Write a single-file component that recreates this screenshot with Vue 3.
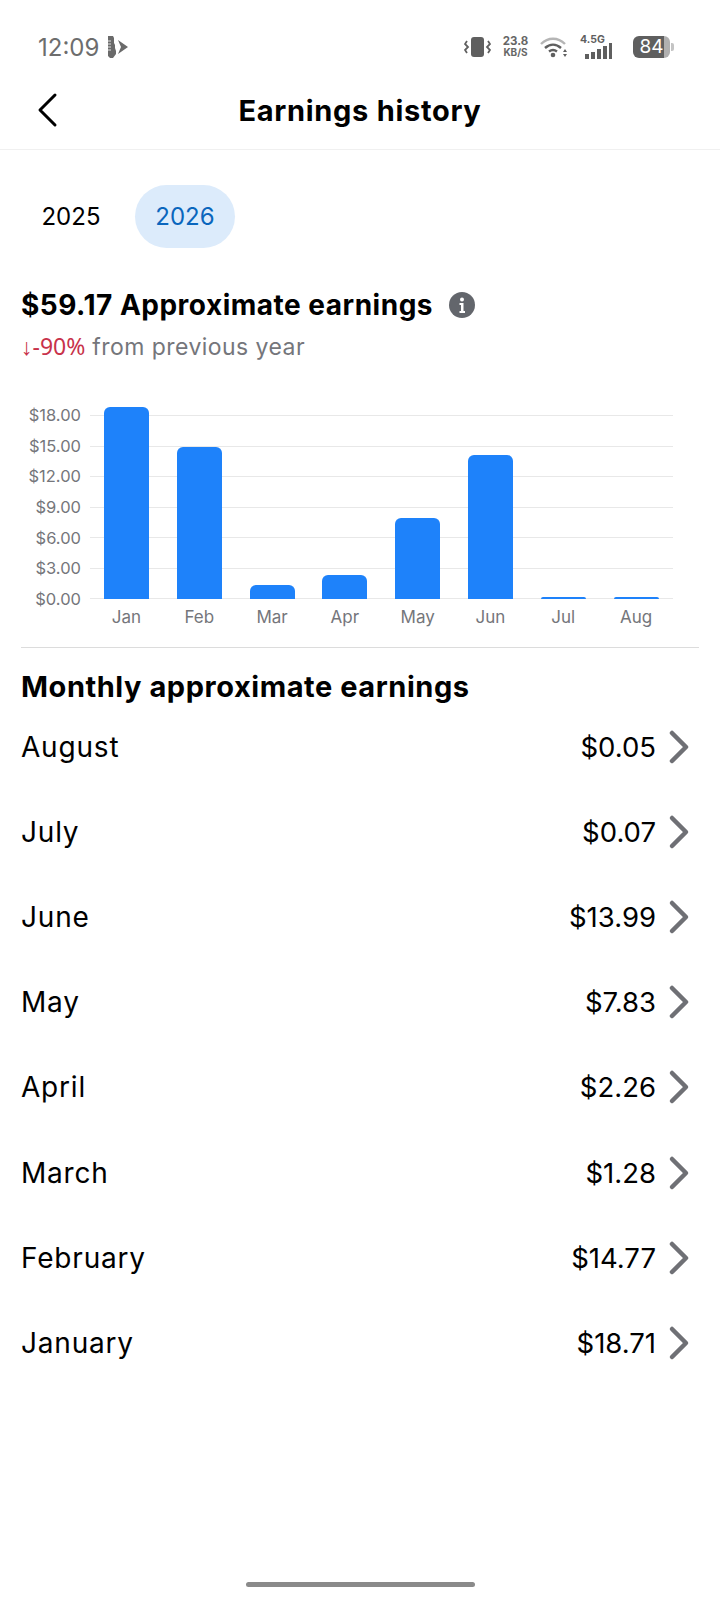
<template>
  <div class="page">
    <div class="status-bar">
      <div class="status-left">
        <span class="clock">12:09</span>
        <svg class="status-glyph" width="22" height="24" viewBox="0 0 22 24">
          <path d="M1 1h5l1 2v5l1 2v3l1 3v3l-3 4-3 0-2-2z" fill="#6a6a6a" />
          <path d="M1 6h3M1 9h3M1 12h3M1 15h3" stroke="#fff" stroke-width="0.800" />
          <path d="M11 5l10 7-10 7 3-7z" fill="#6a6a6a" />
        </svg>
      </div>
      <div class="status-right">
        <svg width="27" height="22" viewBox="0 0 27 22">
          <rect x="7" y="1" width="13" height="20" rx="3" fill="#5f5f5f" />
          <path d="M3 5l-2 3 3 3-3 3 2 3M24 5l2 3-3 3 3 3-2 3" fill="none" stroke="#5f5f5f" stroke-width="1.800" />
        </svg>
        <div class="net-speed"><span>23.8</span><span class="net-unit">KB/S</span></div>
        <svg width="28" height="22" viewBox="0 0 28 22">
          <path d="M1 8c7-7 17-7 24 0" fill="none" stroke="#b5b5b5" stroke-width="2.400" />
          <path d="M5 12c5-4.500 11-4.500 16 0M9 15.500c3-2.300 5-2.300 8 0" fill="none" stroke="#5f5f5f" stroke-width="2.400" />
          <circle cx="13" cy="19" r="2.300" fill="#5f5f5f" />
          <path d="M25 13l2 3h-4zM25 21l2-3h-4z" fill="#5f5f5f" />
        </svg>
        <div class="signal">
          <span class="signal-label">4.5G</span>
          <svg width="28" height="16" viewBox="0 0 28 16">
            <path d="M1 11h4v5h-4zM7 9h4v7h-4zM13 6h4v10h-4zM19 3h4v13h-4zM25 0h3v16h-3z" fill="#5f5f5f" />
          </svg>
        </div>
        <div class="battery">
          <div class="battery-body">84</div>
          <div class="battery-cap"></div>
        </div>
      </div>
    </div>

    <header class="top-bar">
      <svg class="back" width="24" height="36" viewBox="0 0 24 36">
        <path d="M19 3L4 18l15 15" fill="none" stroke="#000" stroke-width="3" stroke-linecap="round" stroke-linejoin="round" />
      </svg>
      <h1>Earnings history</h1>
    </header>

    <div class="tabs">
      <div class="tab">2025</div>
      <div class="tab active">2026</div>
    </div>

    <div class="summary">
      <div class="summary-title">
        <span>$59.17 Approximate earnings</span>
        <svg width="26" height="26" viewBox="0 0 26 26">
          <circle cx="13" cy="13" r="13" fill="#63666c" />
          <circle cx="13" cy="7.500" r="2" fill="#fff" />
          <path d="M10.500 11h4v8h1.500v2h-5.500v-2h1.500v-6h-1.500z" fill="#fff" />
        </svg>
      </div>
      <div class="summary-sub"><span class="down">↓-90%</span> from previous year</div>
    </div>

    <div class="chart">
      <div class="y-axis">
        <span v-for="t in ticks" :key="t">{{ t }}</span>
      </div>
      <div class="plot">
        <div class="grid">
          <div v-for="t in ticks" :key="t" class="grid-line"></div>
        </div>
        <div class="bars">
          <div v-for="b in bars" :key="b.month" class="bar-slot">
            <div class="bar" :style="{ height: b.height + 'px' }"></div>
          </div>
        </div>
      </div>
      <div class="x-axis">
        <span v-for="b in bars" :key="b.month">{{ b.month }}</span>
      </div>
    </div>

    <div class="divider"></div>

    <h2 class="list-title">Monthly approximate earnings</h2>
    <div class="list">
      <div v-for="r in rows" :key="r.name" class="row">
        <span class="row-name">{{ r.name }}</span>
        <span class="row-value">{{ r.value }}</span>
        <svg width="22" height="36" viewBox="0 0 22 36">
          <path d="M4 4l14 14-14 14" fill="none" stroke="#6f7075" stroke-width="4.500" stroke-linecap="round" stroke-linejoin="round" />
        </svg>
      </div>
    </div>

    <div class="home-bar"></div>
  </div>
</template>

<script setup>
const ticks = ['$18.00', '$15.00', '$12.00', '$9.00', '$6.00', '$3.00', '$0.00']

const rows = [
  { name: 'August', value: '$0.05' },
  { name: 'July', value: '$0.07' },
  { name: 'June', value: '$13.99' },
  { name: 'May', value: '$7.83' },
  { name: 'April', value: '$2.26' },
  { name: 'March', value: '$1.28' },
  { name: 'February', value: '$14.77' },
  { name: 'January', value: '$18.71' }
]

const bars = [
  { month: 'Jan', height: 192 },
  { month: 'Feb', height: 152 },
  { month: 'Mar', height: 14 },
  { month: 'Apr', height: 24 },
  { month: 'May', height: 81 },
  { month: 'Jun', height: 144 },
  { month: 'Jul', height: 2 },
  { month: 'Aug', height: 2 }
]
</script>

<style>
html,
body {
  margin: 0;
  background: #fff;
}
</style>

<style scoped>
.page {
  display: flex;
  flex-direction: column;
  width: 720px;
  min-height: 1600px;
  background: #fff;
  color: #000;
  font-family: Inter, "Noto Sans", sans-serif;
}

.status-bar {
  display: flex;
  justify-content: space-between;
  align-items: center;
  height: 46px;
  padding: 24px 46px 0 38px;
  box-sizing: content-box;
}

.status-left,
.status-right {
  display: flex;
  align-items: center;
}

.status-left {
  gap: 8px;
}

.status-right {
  gap: 12px;
}

.clock {
  font-size: 24px;
  color: #6d6d6d;
}

.net-speed {
  display: flex;
  flex-direction: column;
  align-items: center;
  width: 25px;
  font-size: 11.500px;
  line-height: 11px;
  font-weight: 700;
  color: #666;
}

.net-unit {
  font-size: 10px;
}

.signal {
  position: relative;
  width: 32px;
  height: 24px;
  display: flex;
  align-items: flex-end;
  justify-content: flex-end;
}

.signal-label {
  position: absolute;
  left: 0;
  top: -1px;
  font-size: 10.500px;
  line-height: 12px;
  font-weight: 700;
  color: #5f5f5f;
}

.battery {
  display: flex;
  align-items: center;
  gap: 1px;
  margin-left: 9px;
}

.battery-body {
  width: 37px;
  height: 22px;
  border-radius: 6px;
  background: linear-gradient(to right, #5f5f5f 84%, #b0b0b0 84%);
  color: #fff;
  font-size: 19px;
  line-height: 22px;
  text-align: center;
}

.battery-cap {
  width: 3px;
  height: 8px;
  border-radius: 0 2px 2px 0;
  background: #c4c4c4;
}

.top-bar {
  display: flex;
  align-items: center;
  justify-content: center;
  position: relative;
  height: 79px;
  border-bottom: 1px solid #f0f0f0;
}

.back {
  position: absolute;
  left: 36px;
  top: 22px;
}

.top-bar h1 {
  margin: 2px 0 0;
  font-size: 29px;
  letter-spacing: 0.700px;
  font-weight: 700;
}

.tabs {
  display: flex;
  gap: 14px;
  padding: 35px 0 0 21px;
}

.tab {
  width: 100px;
  height: 63px;
  border-radius: 32px;
  text-align: center;
  font-size: 24px;
  line-height: 64px;
}

.tab.active {
  background: #dcebfb;
  color: #0a66bd;
}

.summary {
  padding: 38px 21px 0;
}

.summary-title {
  display: flex;
  align-items: center;
  gap: 16px;
  font-size: 28px;
  letter-spacing: 0.500px;
  line-height: 38px;
  font-weight: 700;
}

.summary-sub {
  margin-top: 6px;
  font-size: 23px;
  letter-spacing: 0.450px;
  line-height: 32px;
  color: #75767b;
}

.down {
  font-family: "Noto Sans", sans-serif;
  letter-spacing: 0;
  color: #c8324a;
}

.chart {
  display: grid;
  grid-template-columns: 69px 583px;
  grid-template-rows: 184px 30px;
  column-gap: 9px;
  margin: 52px 0 0 12px;
}

.y-axis {
  display: flex;
  flex-direction: column;
  justify-content: space-between;
  align-items: flex-end;
  margin: -12px 0;
  font-size: 16.500px;
  line-height: 24px;
  color: #75767b;
}

.plot {
  position: relative;
}

.grid {
  position: absolute;
  inset: 0;
  display: flex;
  flex-direction: column;
  justify-content: space-between;
}

.grid-line {
  height: 1px;
  background: #e8e8e8;
}

.bars {
  position: absolute;
  left: 0;
  right: 0;
  bottom: 0;
  display: flex;
  padding-left: 14px;
}

.bar-slot {
  display: flex;
  flex: none;
  align-items: flex-end;
  width: 72.8px;
}

.bar {
  width: 45px;
  border-radius: 6px 6px 0 0;
  background: #1e82fa;
}

.x-axis {
  grid-column: 2;
  display: flex;
  padding-left: 14px;
  align-items: flex-end;
  font-size: 17px;
  line-height: 24px;
  color: #75767b;
}

.x-axis span {
  flex: none;
  width: 45px;
  margin-right: 27.8px;
  display: flex;
  justify-content: center;
}

.divider {
  height: 1px;
  margin: 18px 21px 0;
  background: #dcdcdc;
}

.list-title {
  margin: 20px 21px 0;
  font-size: 29px;
  letter-spacing: 0.550px;
  line-height: 38px;
  font-weight: 700;
}

.list {
  padding: 0 30px 0 21px;
}

.row {
  display: flex;
  align-items: center;
  height: 85.2px;
  font-size: 28px;
}

.row:first-child {
  margin-top: -2px;
}

.row-name {
  flex: 1;
  letter-spacing: 0.800px;
}

.row-value {
  margin-right: 12px;
  font-size: 27.500px;
}

.home-bar {
  align-self: center;
  width: 229px;
  height: 5px;
  margin-top: auto;
  margin-bottom: 13px;
  border-radius: 3px;
  background: #8a8a8a;
}
</style>
